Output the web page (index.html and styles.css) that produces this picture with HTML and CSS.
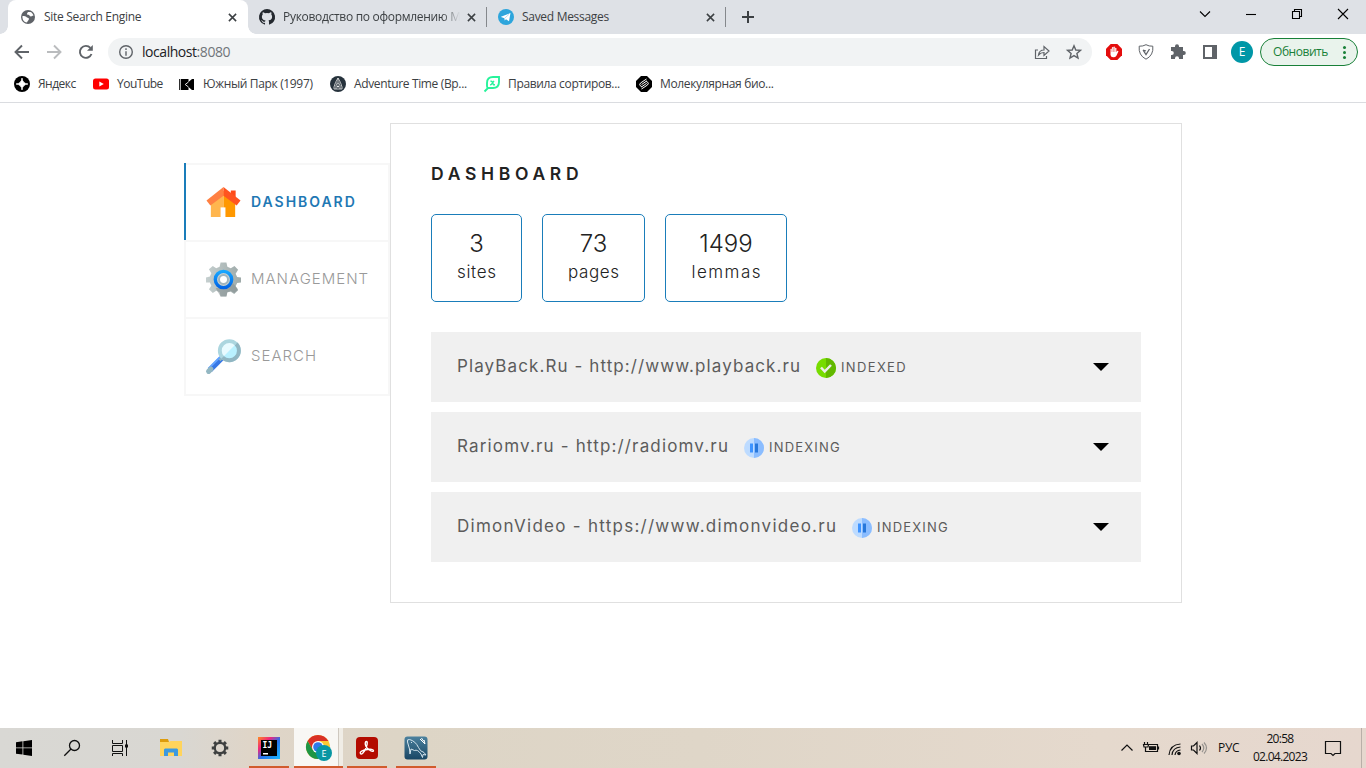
FILE: index.html
```html
<!DOCTYPE html>
<html lang="ru">
<head>
<meta charset="utf-8">
<title>Site Search Engine</title>
<link rel="stylesheet" href="styles.css">
</head>
<body>
<div class="screen">
  <header class="tabs">
    <div class="tab active">
      <svg class="fav" viewBox="0 0 16 16"><circle cx="8" cy="8" r="7" fill="#5f6368"/><path d="M2.500 7c2 .2 3.500 0 4.500 1.500 1 .5 2 .5 2 1.500-.5 1.500-1.500 2-2 3.500C4 13.500 2 10 2.500 7ZM8 3h2.500c1.500.5 2.500 2 3 3.500-1.500 0-1.500 1-2.500 1-1.500 0-1-1-2-1.500s-2 0-2-1.500L8 3Z" fill="#fff"/></svg>
      <span class="title">Site Search Engine</span>
      <svg class="x" viewBox="0 0 10 10"><path d="M1 1l8 8M9 1l-8 8"/></svg>
      <i class="curve left"></i><i class="curve right"></i>
    </div>
    <div class="tab second">
      <svg class="fav" viewBox="0 0 16 16"><path fill="#24292f" d="M8 0a8 8 0 0 0-2.530 15.590c.4.070.55-.17.55-.38v-1.340c-2.230.48-2.700-1.070-2.700-1.070-.36-.93-.89-1.170-.89-1.170-.73-.5.050-.49.050-.49.800.060 1.230.83 1.230.83.710 1.220 1.870.87 2.330.66.070-.52.280-.87.500-1.070-1.780-.2-3.640-.89-3.640-3.950 0-.87.310-1.590.820-2.150-.08-.2-.36-1.020.080-2.120 0 0 .67-.21 2.200.82a7.600 7.600 0 0 1 4 0c1.530-1.040 2.200-.82 2.200-.82.440 1.100.160 1.920.080 2.120.510.560.820 1.270.820 2.150 0 3.070-1.870 3.750-3.650 3.950.290.250.540.730.540 1.480v2.190c0 .21.150.46.550.38A8 8 0 0 0 8 0Z"/></svg>
      <span class="title faded">Руководство по оформлению М</span>
      <svg class="x" viewBox="0 0 10 10"><path d="M1 1l8 8M9 1l-8 8"/></svg>
    </div>
    <div class="tab third">
      <svg class="fav" viewBox="0 0 16 16"><circle cx="8" cy="8" r="8" fill="#2da5dc"/><path d="M3 7.700 12.500 4 11 12.200 8 10.200 6.700 11.500 6.400 9.300 3 8Z" fill="#fff"/><path d="m6.500 9.300 4.500-4" stroke="#a9d5ee" stroke-width=".8"/></svg>
      <span class="title">Saved Messages</span>
      <svg class="x" viewBox="0 0 10 10"><path d="M1 1l8 8M9 1l-8 8"/></svg>
    </div>
    <svg class="plus" viewBox="0 0 14 14"><path d="M7 1v12M1 7h12"/></svg>
    <div class="window">
      <svg viewBox="0 0 12 12"><path d="m1 3.500 5 5 5-5"/></svg>
      <svg viewBox="0 0 12 12"><path d="M1 6.500h10"/></svg>
      <svg viewBox="0 0 12 12"><path d="M1.500 3.500h7v7h-7ZM3.500 3V1.500h7v7H9"/></svg>
      <svg viewBox="0 0 12 12"><path d="m1 1 10 10M11 1 1 11"/></svg>
    </div>
  </header>

  <div class="toolbar">
    <svg class="nav-icon" viewBox="0 0 16 16"><path d="M15 8H2M8 1.500 1.500 8 8 14.500" stroke="#5f6368"/></svg>
    <svg class="nav-icon" viewBox="0 0 16 16"><path d="M1 8h13M8 1.500 14.500 8 8 14.500" stroke="#babcbe"/></svg>
    <svg class="nav-icon" viewBox="0 0 16 16"><path d="M13.500 10A6 6 0 1 1 12.400 3.900" stroke="#5f6368"/><path d="M14.800 1v5.800H9Z" fill="#5f6368" stroke="none"/></svg>
    <div class="address">
      <svg class="info" viewBox="0 0 16 16"><circle cx="8" cy="8" r="6.300"/><path d="M8 7.200v4.500M8 4.300V6"/></svg>
      <span class="url">localhost<em>:8080</em></span>
      <svg class="share" viewBox="0 0 16 16"><path d="M4 6H1.500v8.500h11V12M4.500 11c.5-3.500 2.500-5 5.500-5V2.500l5 4.500-5 4.500V8.500c-2.500 0-4 .7-5.500 2.500Z"/></svg>
      <svg class="star" viewBox="0 0 16 16"><path d="m8 1.700 1.800 4.300 4.700.4-3.600 3.100 1.100 4.600L8 11.600l-4 2.500 1.100-4.600-3.600-3.100 4.700-.4Z"/></svg>
    </div>
    <div class="extensions">
      <svg viewBox="0 0 16 16"><path d="M4.700 0h6.600L16 4.700v6.600L11.300 16H4.700L0 11.300V4.700Z" fill="#e40d0d"/><path d="M4.500 8.500V5q.8-.7 1.400 0V3.500q.7-.8 1.500 0V3q.8-.8 1.500 0v1q.8-.7 1.500 0v4l1-1.200q1-.2 1 .6l-2 4.300q-1 1.600-3.200 1.500-2.300-.2-2.700-2.300Z" fill="#fff"/><path d="M5.900 4.500V8M7.400 3.500V8M8.900 3.500V8" stroke="#e40d0d" stroke-width=".4"/></svg>
      <svg viewBox="0 0 16 16" fill="none" stroke="#5f6368"><path d="M8 .7q3 1.700 6.800 1.500 1 9-6.800 13Q.2 11.200 1.200 2.200 5 2.400 8 .7Z"/><path d="m5 6 3 4.500L11.500 5M5 6l3 1" stroke-width="1.300"/></svg>
      <svg viewBox="0 0 16 16"><path fill="#5f6368" d="M1 3h4v-.8a2 2 0 0 1 4 0V3h4v4h.8a2 2 0 0 1 0 4H13v4H9v-.8a2 2 0 0 0-4 0v.8H1v-4h.8a2 2 0 0 0 0-4H1Z"/></svg>
      <svg viewBox="0 0 16 16"><path fill="#5f6368" fill-rule="evenodd" d="M1 1h14v14H1ZM3 3v10h7V3Z"/></svg>
    </div>
    <span class="avatar">E</span>
    <div class="update"><span>Обновить</span><i class="dots"></i></div>
  </div>

  <nav class="bookmarks">
    <div class="bm" style="width:79px"><svg viewBox="0 0 16 16"><circle cx="8" cy="8" r="8"/><path d="M8 2Q8.500 7.500 14 8 8.500 8.500 8 14 7.500 8.500 2 8 7.500 7.500 8 2Z" fill="#fff" stroke="#fff" stroke-width=".7"/></svg><span class="b1">Яндекс</span></div>
    <div class="bm" style="width:86px"><svg viewBox="0 0 16 16"><rect y="2.500" width="16" height="11" rx="2.500" fill="red"/><path d="m6.300 5.500 4.500 2.500-4.500 2.500Z" fill="#fff"/></svg><span class="b2">YouTube</span></div>
    <div class="bm" style="width:151px"><svg viewBox="0 0 16 16"><path d="M0 3h9.500v3L13 3h2v11h-2l-3.500-3V14H0Z"/><path d="m9.500 6-3.300 2.500 3.300 2.500M1.300 3v11" stroke="#fff" fill="none" stroke-width=".9"/></svg><span class="b3">Южный Парк (1997)</span></div>
    <div class="bm" style="width:154px"><svg viewBox="0 0 16 16"><circle cx="8" cy="8" r="8" fill="#26323c"/><path d="M8 2 5.500 6.500 4 11v2h8v-2l-1.500-4.500ZM6 7h4M6 13V9l2-1.500L10 9v4M8 2v4" fill="none" stroke="#e6e6e6" stroke-width=".8"/><circle cx="8" cy="10.500" r="1" fill="#fff"/></svg><span class="b4">Adventure Time (Вр...</span></div>
    <div class="bm" style="width:152px"><svg viewBox="0 0 16 16" fill="none" stroke="#27f39b" stroke-width="1.900"><path d="M.5 15.500 4 12h5q6 0 6-6V1H9Q3 1 3 7v3q0 1.500 1 2"/><path d="M6 8.900q1.200 0 2-1.200l2-2.900M6.500 5l1.500.5 1.500 3.300h1.500" stroke-width="1.400"/></svg><span class="b5">Правила сортиров...</span></div>
    <div class="bm"><svg viewBox="0 0 16 16"><path d="M5 0h6l5 5v6l-5 5H5l-5-5V5Z"/><path d="m10.500 3-6 4q-1.800 1.800.2 3.200L6 11M5.500 13l6-4q1.800-1.800-.2-3.200L10 5M5.500 8.600l5-3.500M5.700 10.800l5-3.500" fill="none" stroke="#fff" stroke-width="1"/></svg><span class="b6">Молекулярная био...</span></div>
  </nav>

  <main class="page">
    <aside class="menu">
      <a class="item current">
        <svg viewBox="0 0 36 36"><path d="M5 15 18 5v27H5Z" fill="#ffb64e"/><path d="m18 5 12 10v17H18Z" fill="#ff9800"/><path d="M15 22h5v10h-5Z" fill="#fff"/><path d="M25.500 4.500h5V14l-5-4Z" fill="#ff4b18"/><path d="M18 1v9L4.500 20 .5 15Z" fill="#ff8042"/><path d="m18 1 17.500 14-4 5L18 10Z" fill="#ff5420"/></svg>
        <span>DASHBOARD</span>
      </a>
      <a class="item">
        <svg viewBox="0 0 36 36"><defs><linearGradient id="g"><stop stop-color="#c5cfcf"/><stop offset="1" stop-color="#9eaaa9"/></linearGradient><linearGradient id="r" x2="0" y2="1"><stop stop-color="#16a6ff"/><stop offset="1" stop-color="#0064e6"/></linearGradient></defs><path d="m15 .5 6 0 1 4.500 3.500 1.500L29.300 4 33 8l-2.500 4 1.500 3.500 4 .5v5l-4 .5-1.500 3.500 2.500 4-4 4-3.500-2.500L22 31l-1 4.500h-6L14 31l-3.500-1.500L7 32l-4-4 2.500-3.500L4 21H0v-5l4-1 1.500-3.500L3 7.500 7 4l3.500 2.500L14 5Z" fill="url(#g)"/><path d="m10 27 5 8.500h6l1-4.500 3.500-1.500L29 32l4-4-5-6Z" fill="#808a8b" opacity=".5"/><circle cx="18" cy="18" r="8.400" fill="#c7d1d1" stroke="url(#r)" stroke-width="3.500"/><circle cx="18" cy="18" r="4.600" fill="#fff" stroke="#a0b4bd" stroke-width="2"/></svg>
        <span class="management">MANAGEMENT</span>
      </a>
      <a class="item">
        <svg viewBox="0 0 36 36"><path d="m4 32 12-12" stroke="#3777e5" stroke-width="5.500"/><path d="m2.500 30.500 12-12" stroke="#62a3ff" stroke-width="2"/><path d="m14 22 4-4" stroke="#8fb5bf" stroke-width="2.500"/><path d="m2.700 33.300 2.300-2.300" stroke="#93b7c2" stroke-width="5.300" stroke-linecap="round"/><circle cx="24" cy="12" r="9.800" fill="#e8fbff" stroke="#acd6df" stroke-width="4"/><path d="M31 5A9.900 9.900 0 0 1 17 19Z" fill="#b9f1ff"/><path d="M31 5A9.900 9.900 0 0 1 17 19" fill="none" stroke="#91b6c2" stroke-width="4"/></svg>
        <span class="search">SEARCH</span>
      </a>
    </aside>
    <section class="panel">
      <h1><span>DASHBOARD</span></h1>
      <div class="stats">
        <div class="stat s1"><b>3</b><span>sites</span></div>
        <div class="stat s2"><b>73</b><span>pages</span></div>
        <div class="stat s3"><b>1499</b><span>lemmas</span></div>
      </div>
      <div class="sites">
        <div class="site"><div class="name n1"><span>PlayBack.Ru - http://www.playback.ru</span></div>
          <svg class="status" viewBox="0 0 20 20"><circle cx="10" cy="10" r="10" fill="#77dc00"/><path d="M10 0a10 10 0 0 1 0 20Z" fill="#62b800"/><path d="m5 9.500 3.700 4L15 7" fill="none" stroke="#ededed" stroke-width="2.500"/></svg>
          <span class="state st1">INDEXED</span><i class="arrow"></i></div>
        <div class="site"><div class="name n2"><span>Rariomv.ru - http://radiomv.ru</span></div>
          <svg class="status" viewBox="0 0 20 20"><circle cx="10" cy="10" r="10" fill="#bddbff"/><path d="M10 0a10 10 0 0 1 0 20Z" fill="#8bbdff"/><path d="M6 5.500h3v9H6Z" fill="#3d93ff"/><path d="M11 5.500h3v9h-3Z" fill="#2777da"/></svg>
          <span class="state">INDEXING</span><i class="arrow"></i></div>
        <div class="site"><div class="name n3"><span>DimonVideo - https://www.dimonvideo.ru</span></div>
          <svg class="status" viewBox="0 0 20 20"><circle cx="10" cy="10" r="10" fill="#bddbff"/><path d="M10 0a10 10 0 0 1 0 20Z" fill="#8bbdff"/><path d="M6 5.500h3v9H6Z" fill="#3d93ff"/><path d="M11 5.500h3v9h-3Z" fill="#2777da"/></svg>
          <span class="state">INDEXING</span><i class="arrow"></i></div>
      </div>
    </section>
  </main>

  <footer class="taskbar">
    <div class="cell"><svg class="i16" viewBox="0 0 16 16"><path d="m0 2.200 6.500-.9v6.200H0ZM7.300 1.200 16 0v7.500H7.300ZM0 8.300h6.500v6.200L0 13.700ZM7.300 8.300H16V16l-8.700-1.300Z"/></svg></div>
    <div class="cell"><svg class="i16" viewBox="0 0 16 16" fill="none" stroke="#111" stroke-width="1.300"><circle cx="10.500" cy="5.500" r="5"/><path d="M7 9 .3 15.700"/></svg></div>
    <div class="cell"><svg class="i16" viewBox="0 0 16 16" fill="none" stroke="#111"><path d="M.5 0v3.500h10V0M.5 5.500h10v6H.5ZM.5 16v-2.500h10V16M14.500 0v16"/><path d="M13 4.500h3v3h-3Z" fill="#111" stroke="none"/></svg></div>
    <div class="cell folder"><svg viewBox="0 0 24 24"><path d="M1 3h8l1 3H1Z" fill="#dd9c0c"/><path d="M1 6h9l1.500-1H23v15H1Z" fill="#ffd45c"/><path d="M5 20v-6.500l1-1h12l1 1V20h-4v-3.500H9V20Z" fill="#3c99df"/></svg></div>
    <div class="cell settings"><svg viewBox="0 0 24 24" fill="none" stroke="#3e4040"><circle cx="12" cy="12" r="5.700" stroke-width="2.500"/><path d="M12 3v3M12 18v3M3 12h3M18 12h3M5.600 5.600 7.700 7.700M16.300 16.300l2.100 2.100M5.600 18.400l2.100-2.100M16.300 7.700l2.100-2.100" stroke-width="3.300"/></svg></div>
    <div class="cell app ij"><svg viewBox="0 0 24 24"><defs><linearGradient id="j" x2="1" y2="1"><stop stop-color="#ff8b20"/><stop offset=".3" stop-color="#ee257d"/><stop offset=".55" stop-color="#2474ee"/><stop offset="1" stop-color="#19baff"/></linearGradient></defs><path d="M1 1h22v22H1Z" fill="url(#j)"/><path d="M4 4h16v16H4Z"/><path d="M6 17h5v1.500H6Z" fill="#fff"/><text x="5.500" y="12" class="ij-text">IJ</text></svg></div>
    <div class="cell app chrome"><svg viewBox="0 0 28 28"><circle cx="13" cy="13" r="12" fill="#fcc934"/><path d="M2.600 7A12 12 0 0 1 23.400 7H13l-5.200 9Z" fill="#d93025"/><path d="M2.600 7A12 12 0 0 0 13 25l5.200-9H7.800Z" fill="#1e9545"/><circle cx="13" cy="13" r="6" fill="#fff"/><circle cx="13" cy="13" r="4.800" fill="#2f79ea"/><circle cx="19" cy="19" r="8" fill="#0796a3"/><text x="16.500" y="22.500" class="badge">E</text></svg></div>
    <div class="cell app pdf"><svg viewBox="0 0 24 24"><rect x="1" y="1" width="22" height="22" rx="4" fill="#b30b00"/><path d="M5.500 17.500c-1.500-2 3.500-3.500 7-4 3-.5 6-.2 6 1.300 0 1.700-5.500-.5-7.500-4.300C9.800 8 10 5.500 11.500 5.500c2 0-.5 9-4 12-1 .7-1.600.6-2 0Z" fill="none" stroke="#fff" stroke-width="1.400"/></svg></div>
    <div class="cell app sql"><svg viewBox="0 0 24 24"><defs><linearGradient id="q" x2="0" y2="1"><stop stop-color="#4b819e"/><stop offset="1" stop-color="#194664"/></linearGradient></defs><rect x=".5" y=".5" width="23" height="23" rx="3" fill="url(#q)"/><path d="M6 18 5.500 13 3.500 6q-.8-3 2-2.500 6 1.500 9 8 1.500 4 5.500 5l2 2.500-3-.5-.5 3-1.500-3.500q-3.500-5-6.500-3.500L7 13l-1 5M7 6.500h1" fill="none" stroke="#d5e4ed"/><path d="m16 3 5 5-.8-3.200M17.500 2l1.500 2.500 2 .5" fill="none" stroke="#fff"/></svg></div>
    <div class="tray">
      <svg viewBox="0 0 16 16"><path d="m2.500 10.500 5.500-5.500 5.500 5.500"/></svg>
      <svg viewBox="0 0 16 16"><path d="M4.500 4.500h10v7h-10M15.500 6.500v3M2.500 7.500v4h2M1.500 2v2M4.500 2v2M.5 4.500h5L5 7H1Z"/><path d="M6 6.200h7v3.800H6Z" fill="#111" stroke="none"/></svg>
      <svg viewBox="0 0 16 16"><path d="M2 15Q3 4.500 13.500 4M5 15q.7-7.500 8.500-8M8 15q.5-4.500 5.500-5"/><circle cx="12" cy="13.500" r="1.800" fill="#111" stroke="none"/></svg>
      <svg viewBox="0 0 16 16"><path d="M.5 6h2L6 2.500v11L2.500 10h-2ZM8.500 5.500q2 2.500 0 5"/><path d="M11 4q3.500 4 0 8M13 2.500q5 5.500 0 11" stroke="#97938f"/></svg>
    </div>
    <span class="lang">РУС</span>
    <div class="clock"><span>20:58</span><span class="date">02.04.2023</span></div>
    <svg class="notice" viewBox="0 0 18 18"><path d="M1.500 1.500h15v12H11L9 15.500l-2-2H1.500Z"/></svg>
  </footer>
</div>
</body>
</html>
```
FILE: styles.css
```css
* { box-sizing: border-box; }
body { margin: 0; background: #fff; font: 12px "Open Sans", "Noto Sans", sans-serif; color: #3c4043; }
svg { display: block; flex: none; overflow: visible; }
span { white-space: nowrap; }
.screen { width: 1366px; height: 768px; display: flex; flex-direction: column; overflow: hidden; }

.tabs { height: 34px; background: #dee1e6; display: flex; flex: none; padding-left: 8px; }
.tab { height: 34px; width: 239px; display: flex; align-items: center; position: relative; }
.tab .fav { width: 16px; height: 16px; }
.tab .title { width: 184px; margin-left: 8px; padding-bottom: 1px; letter-spacing: -.3px; overflow: hidden; }
.tab .x { width: 9px; height: 9px; stroke: #3c4043; stroke-width: 1.700; fill: none; }
.tab.active { width: 240px; background: #fff; border-radius: 8px 8px 0 0; padding-left: 12px; }
.curve { position: absolute; bottom: 0; width: 8px; height: 8px; }
.curve.left { left: -8px; background: radial-gradient(circle at 0 0, transparent 7.500px, #fff 8px); }
.curve.right { right: -8px; background: radial-gradient(circle at 100% 0, transparent 7.500px, #fff 8px); }
.tab.second { padding-left: 11px; }
.tab.second .title { width: 177px; margin-right: 7px; }
.tab.third { padding-left: 11px; }
.tab.second::after, .tab.third::after { content: ""; position: absolute; right: 0; top: 7px; width: 1px; height: 20px; background: #85888c; }
.title.faded { -webkit-mask-image: linear-gradient(90deg, #000 160px, transparent 177px); mask-image: linear-gradient(90deg, #000 160px, transparent 177px); }
.plus { width: 14px; height: 14px; margin: 10px 0 0 15px; stroke: #3c4043; stroke-width: 2; }
.window { margin-left: auto; padding: 8px 17px 0 0; display: flex; gap: 34px; }
.window svg { width: 12px; height: 12px; fill: none; stroke: #000; stroke-width: 1.100; }

.toolbar { height: 36px; display: flex; flex: none; align-items: center; padding: 0 8px 0 14px; }
.nav-icon { width: 16px; height: 16px; margin-right: 16px; fill: none; stroke-width: 1.900; }
.address { width: 984px; height: 28px; margin-left: -2px; background: #f1f3f4; border-radius: 14px; display: flex; align-items: center; padding: 0 10px; font-size: 14px; color: #202124; }
.address svg { width: 16px; height: 16px; fill: none; stroke: #5f6368; stroke-width: 1.400; }
.address .share { margin-left: auto; margin-right: 16px; stroke-width: 1.200; }
.url { margin-left: 8px; letter-spacing: -.45px; padding-bottom: 1px; }
.url em { font-style: normal; color: #70757a; }
.extensions { display: flex; gap: 16px; margin-left: 14px; }
.extensions svg { width: 16px; height: 16px; }
.avatar { width: 22px; height: 22px; margin-left: 13px; border-radius: 50%; background: #0097a7; color: #fff; text-align: center; line-height: 21px; }
.update { width: 98px; height: 28px; margin-left: 7px; border: 1px solid #188038; border-radius: 14px; background: #e9f3ec; color: #188038; display: flex; align-items: center; padding-left: 12px; letter-spacing: -.45px; }
.update span { width: 70px; padding-bottom: 1px; }
.dots { width: 3px; height: 3px; border-radius: 50%; background: #188038; box-shadow: 0 -5px #188038, 0 5px #188038; }
.bookmarks { height: 33px; flex: none; border-bottom: 1px solid #dadce0; display: flex; padding: 6px 0 0 14px; }
.bm { height: 16px; display: flex; align-items: center; gap: 8px; letter-spacing: -.35px; }
.bm svg { width: 16px; height: 16px; }
.bm span { padding-bottom: 1px; }
.b1, .b2 { letter-spacing: -.5px; }

.page { flex: 1; display: flex; align-items: flex-start; padding: 20px 184px 0; font-family: Inter, "Open Sans", sans-serif; }
.menu { width: 206px; margin-top: 40px; border: 2px solid #f7f7f7; border-bottom: 0; }
.item { height: 77px; border-bottom: 2px solid #f7f7f7; padding-left: 20px; display: flex; align-items: center; gap: 10px; color: #999; font-size: 15px; font-weight: 300; letter-spacing: 1px; }
.item svg { width: 35px; height: 35px; }
.item span { padding-bottom: 2px; }
.item.current { position: relative; color: #1f78b4; font-size: 14px; font-weight: 600; letter-spacing: 1.980px; }
.item.current svg { margin-top: 2px; }
.item.current::before { content: ""; position: absolute; left: -2px; top: -2px; width: 2px; height: 77px; background: #1a7dba; }
.panel { width: 792px; height: 480px; border: 1px solid #e0e0e0; padding: 38px 40px 0; color: #222; }
h1 { margin: 0; height: 24px; line-height: 24px; font-size: 17.500px; font-weight: 600; letter-spacing: 4.700px; }
.stats { display: flex; gap: 20px; margin-top: 28px; }
.stat { height: 88px; border: 1px solid #1a7dba; border-radius: 5px; display: flex; flex-direction: column; align-items: center; padding-top: 13px; font-size: 17px; font-weight: 300; }
.stat b { font-size: 24px; line-height: 32px; font-weight: 300; }
.stat span { line-height: 24px; letter-spacing: .65px; margin-right: -.65px; }
.stat.s3 span { letter-spacing: 1.500px; margin-right: -1.500px; }
.s1 { width: 91px; } .s2 { width: 103px; } .s3 { width: 122px; }
.sites { display: flex; flex-direction: column; gap: 10px; margin-top: 30px; }
.site { height: 70px; background: #f0f0f0; display: flex; align-items: center; padding: 0 32px 0 26px; color: #5c5c5c; }
.name { font-size: 17px; padding-bottom: 2px; }
.n1 { width: 359px; letter-spacing: 1.100px; } .n2 { width: 287px; letter-spacing: 1.160px; } .n3 { width: 395px; letter-spacing: 1.270px; }
.status { width: 20px; height: 20px; margin-right: 5px; margin-top: 1px; }
.state { font-size: 13px; letter-spacing: 1.200px; }
.st1 { letter-spacing: 1.350px; }
.arrow { margin-left: auto; border: solid transparent; border-width: 8px 8px 0; border-top-color: #000; }

.taskbar { height: 40px; flex: none; display: flex; background: linear-gradient(90deg, #d9d8d4, #d9d7d2 180px, #dfd5c8 250px, #ddd5c6 400px, #dfd6c8 700px, #e5d9cd 1100px, #e6d7ce); color: #111; }
.cell { width: 48px; display: flex; align-items: center; justify-content: center; }
.i16 { width: 16px; height: 16px; }
.folder { width: 52px; } .folder svg { width: 24px; height: 24px; margin-left: 1px; }
.settings { width: 48px; } .settings svg { width: 22px; height: 22px; }
.app { width: 40px; border-bottom: 2px solid #d15b2d; padding-top: 2px; }
.app svg { width: 24px; height: 24px; }
.ij { margin-left: 5px; }
.ij-text { font: bold 8px "DejaVu Sans Mono", monospace; fill: #fff; }
.chrome { width: 49px; margin-left: 5px; background: linear-gradient(90deg, #f8f7f4 44px, #cec8bf 44px 45px, #f0ede6 45px); }
.chrome svg { width: 28px; height: 28px; }
.badge { font: 9px "Open Sans", sans-serif; fill: #fff; }
.pdf { margin-left: 4px; }
.sql { margin-left: 9px; }
.tray { display: flex; align-items: center; gap: 8px; margin-left: auto; }
.tray svg { width: 16px; height: 16px; fill: none; stroke: #111; stroke-width: 1.200; }
.lang { width: 23px; margin-left: 11px; line-height: 39px; letter-spacing: -.3px; }
.clock { width: 56px; margin-left: 11px; padding-top: 2px; display: flex; flex-direction: column; align-items: center; line-height: 18px; letter-spacing: -.7px; }
.notice { width: 18px; height: 18px; margin: 12px 24px 0 16px; fill: none; stroke: #111; stroke-width: 1.200; }
.taskbar { position: relative; }
.taskbar::after { content: ""; position: absolute; right: 4px; top: 0; width: 1px; height: 40px; background: #b9afa8; }
```
